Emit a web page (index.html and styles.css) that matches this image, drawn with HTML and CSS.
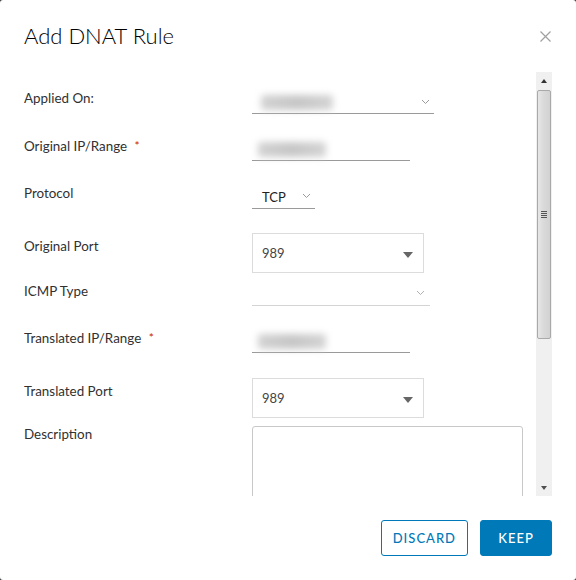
FILE: index.html
```html
<!DOCTYPE html>
<html lang="en">
<head>
<meta charset="utf-8">
<title>Add DNAT Rule</title>
<link rel="stylesheet" href="styles.css">
</head>
<body>
<div class="modal">
  <header class="modal-header">
    <h3 class="modal-title">Add DNAT Rule</h3>
    <button class="close" aria-label="Close">
      <svg width="11" height="11" viewBox="0 0 11 11"><path d="M0.5 0.5 L10.5 10.5 M10.5 0.5 L0.5 10.5" stroke="#a0a0a0" stroke-width="1.2" fill="none"/></svg>
    </button>
  </header>

  <div class="modal-body">
    <div class="scroll-content">
      <form class="form">
        <div class="form-row">
          <label class="form-label">Applied On:</label>
          <div class="select-line select-applied">
            <span class="blurred blur-applied"></span>
            <svg class="chevron" width="9" height="6" viewBox="0 0 9 6"><polyline points="1,1 4.5,4.5 8,1" stroke="#9a9a9a" stroke-width="1" fill="none"/></svg>
          </div>
        </div>

        <div class="form-row">
          <label class="form-label">Original IP/Range <span class="required">*</span></label>
          <div class="input-line">
            <span class="blurred blur-ip"></span>
          </div>
        </div>

        <div class="form-row">
          <label class="form-label">Protocol</label>
          <div class="select-line select-protocol">
            <span class="select-value">TCP</span>
            <svg class="chevron" width="9" height="6" viewBox="0 0 9 6"><polyline points="1,1 4.5,4.5 8,1" stroke="#9a9a9a" stroke-width="1" fill="none"/></svg>
          </div>
        </div>

        <div class="form-row form-row--box">
          <label class="form-label">Original Port</label>
          <div class="combo-box">
            <span class="combo-value">989</span>
            <span class="caret"></span>
          </div>
        </div>

        <div class="form-row form-row--after-box">
          <label class="form-label">ICMP Type</label>
          <div class="select-line select-icmp">
            <svg class="chevron" width="9" height="6" viewBox="0 0 9 6"><polyline points="1,1 4.5,4.5 8,1" stroke="#b0b0b0" stroke-width="1" fill="none"/></svg>
          </div>
        </div>

        <div class="form-row">
          <label class="form-label">Translated IP/Range <span class="required">*</span></label>
          <div class="input-line">
            <span class="blurred blur-ip"></span>
          </div>
        </div>

        <div class="form-row form-row--box form-row--wide-gap">
          <label class="form-label">Translated Port</label>
          <div class="combo-box">
            <span class="combo-value">989</span>
            <span class="caret"></span>
          </div>
        </div>

        <div class="form-row form-row--after-box">
          <label class="form-label form-label--flush">Description</label>
          <textarea class="textarea"></textarea>
        </div>
      </form>
    </div>

    <div class="scrollbar" aria-hidden="true">
      <div class="sb-btn"><span class="sb-arrow sb-arrow--up"></span></div>
      <div class="sb-track">
        <div class="sb-thumb"><span class="grip"></span></div>
      </div>
      <div class="sb-btn"><span class="sb-arrow sb-arrow--down"></span></div>
    </div>
  </div>

  <footer class="modal-footer">
    <button class="btn btn-outline">Discard</button>
    <button class="btn btn-primary">Keep</button>
  </footer>
</div>
</body>
</html>
```

FILE: styles.css
```css
* { box-sizing: border-box; }

html, body {
  margin: 0;
  padding: 0;
  width: 576px;
  height: 580px;
  background: #3a3a3a;
  overflow: hidden;
}

body {
  font-family: Lato, "Noto Sans", sans-serif;
  font-size: 13px;
  color: #313131;
}

.modal {
  width: 576px;
  height: 580px;
  background: #fff;
  border-radius: 3px;
  display: flex;
  flex-direction: column;
}

/* header */
.modal-header {
  height: 72px;
  padding: 0 24px;
  display: flex;
  align-items: center;
  justify-content: space-between;
  flex: none;
}

.modal-title {
  margin: 0;
  font-size: 22px;
  font-weight: 300;
  color: #000;
  line-height: 28px;
  margin-top: -1px;
}

.close {
  border: 0;
  background: none;
  padding: 0;
  width: 11px;
  height: 11px;
  margin-right: 1px;
  display: flex;
}

/* body */
.modal-body {
  height: 424px;
  flex: none;
  display: flex;
  padding: 0 24px;
}

.scroll-content {
  flex: 1;
  overflow: hidden;
  padding-top: 16px;
  margin-right: 13px;
}

.form-row {
  display: grid;
  grid-template-columns: 228px auto;
  align-items: start;
  justify-items: start;
}

.form-row + .form-row { margin-top: 22px; }
.form-row--box { margin-top: 24px !important; }
.form-row--wide-gap { margin-top: 25px !important; }
.form-row--after-box { margin-top: 8px !important; }

.form-label {
  font-size: 13.4px;
  line-height: 16px;
  padding-top: 2px;
  color: #313131;
  white-space: nowrap;
}
.form-label--flush { padding-top: 0; }
.form-row--box .form-label { padding-top: 5px; }

.required {
  color: #c92100;
  margin-left: 4px;
  font-size: 12px;
  vertical-align: 1px;
}

/* underline controls */
.select-line,
.input-line {
  position: relative;
  border-bottom: 1px solid #9a9a9a;
}

.select-applied { width: 182px; height: 26px; }
.select-protocol {
  width: 63px;
  height: 26px;
  display: flex;
  align-items: center;
  padding-left: 10px;
}
.select-icmp { width: 178px; height: 25px; border-bottom-color: #d4d4d4; }
.input-line { width: 158px; height: 25px; }

.select-value {
  color: #222;
  font-size: 13px;
  line-height: 16px;
  padding-top: 2px;
}

.chevron {
  position: absolute;
  right: 4px;
  top: 11px;
}
.select-protocol .chevron { right: 4px; top: 10px; }
.select-icmp .chevron { right: 5px; top: 9px; }

.blurred {
  position: absolute;
  background: linear-gradient(to right, #d2d2d2 0%, #c6c6c6 50%, #d4d4d4 100%);
  filter: blur(3.5px);
  border-radius: 3px;
}
.blur-applied { left: 9px; top: 7px; width: 72px; height: 15px; }
.blur-ip { left: 6px; top: 6px; width: 68px; height: 15px; }

/* combo box */
.combo-box {
  width: 172px;
  height: 40px;
  border: 1px solid #dcdcdc;
  display: flex;
  align-items: center;
  justify-content: space-between;
  padding: 0 10px 0 9px;
}

.combo-value {
  font-size: 13px;
  color: #444;
  line-height: 16px;
}

.caret {
  width: 0;
  height: 0;
  border-left: 5px solid transparent;
  border-right: 5px solid transparent;
  border-top: 6px solid #666;
  margin-top: 3px;
}

.textarea {
  width: 271px;
  height: 90px;
  border: 1px solid #c8c8c8;
  border-radius: 3px;
  resize: none;
  margin: 0;
  display: block;
  font-family: inherit;
}

/* fake scrollbar */
.scrollbar {
  width: 16px;
  flex: none;
  display: flex;
  flex-direction: column;
  background: #f0f0f0;
}

.sb-btn {
  height: 17px;
  display: flex;
  align-items: center;
  justify-content: center;
  flex: none;
}

.sb-arrow {
  width: 0;
  height: 0;
  border-left: 3.5px solid transparent;
  border-right: 3.5px solid transparent;
}
.sb-arrow--up { border-bottom: 4px solid #333; }
.sb-arrow--down { border-top: 4px solid #505050; }

.sb-track {
  flex: 1;
  padding-top: 1px;
}

.sb-thumb {
  height: 249px;
  margin: 0 1px;
  border: 1px solid #a9a9a9;
  border-radius: 2px;
  background: linear-gradient(to right, #e6e6e6 0%, #dadada 45%, #d2d2d2 100%);
  display: flex;
  align-items: center;
  justify-content: center;
}

.grip {
  width: 6px;
  height: 7px;
  background: repeating-linear-gradient(to bottom, #555 0, #555 1px, transparent 1px, transparent 2px);
}

/* footer */
.modal-footer {
  flex: 1;
  display: flex;
  justify-content: flex-end;
  align-items: flex-start;
  gap: 12px;
  padding: 24px 24px 0;
}

.btn {
  height: 36px;
  min-width: 72px;
  padding: 0 11px;
  border-radius: 3px;
  font-family: Lato, "Noto Sans", sans-serif;
  font-size: 13px;
  font-weight: 500;
  letter-spacing: 1px;
  text-transform: uppercase;
  cursor: pointer;
}

.btn-outline {
  background: #fff;
  color: #0079b8;
  border: 1px solid #0079b8;
}

.btn-primary {
  background: #0079b8;
  color: #fff;
  border: 1px solid #0079b8;
}
```
